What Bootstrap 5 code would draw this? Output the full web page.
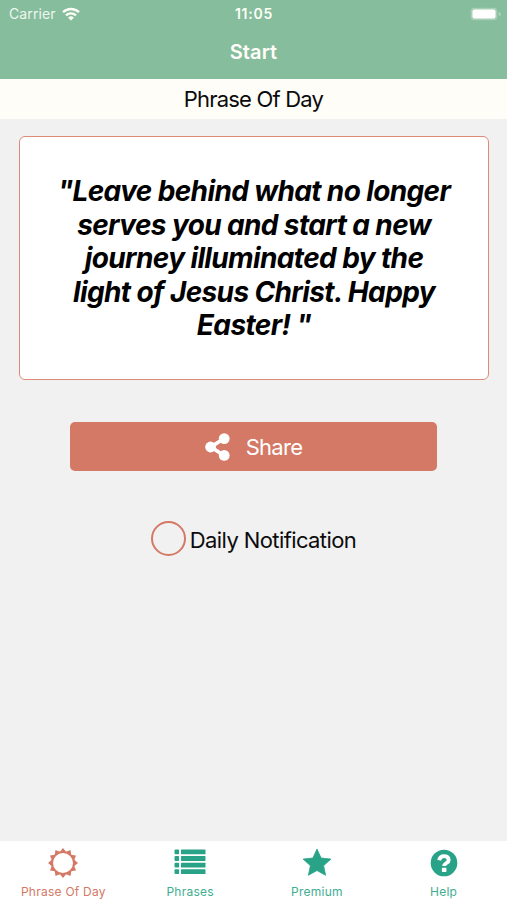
<!DOCTYPE html>
<html lang="en">
<head>
<meta charset="utf-8">
<meta name="viewport" content="width=device-width, initial-scale=1">
<title>Phrase Of Day</title>
<link href="https://cdn.jsdelivr.net/npm/bootstrap@5.3.0/dist/css/bootstrap.min.css" rel="stylesheet">
<style>
  :root { --coral: #d47965; --mint: #86bd9d; --teal: #29a387; }
  body { font-family: Inter, "Liberation Sans", sans-serif; background: #f1f1f1; color: #0b0b0b; overflow: hidden; }
  svg { display: block; flex: none; }
  .app-head { background: var(--mint); height: 79px; color: #fffef8; }
  .status { height: 27px; padding: 0 6px 0 9px; font-size: 14px; line-height: 27px; }
  .status > div { flex: 1 1 0; }
  .carrier { letter-spacing: .1px; color: #eef7ee; gap: 6px; }
  .clock { font-weight: 600; letter-spacing: .75px; margin-right: 2px; }
  .app-title { font-size: 20px; font-weight: 600; line-height: 51px; letter-spacing: .1px; }
  .subhead { background: #fffdf8; height: 40px; font-size: 22px; line-height: 40px; letter-spacing: -.8px; }
  .quote-card { margin: 17px 18px 0 19px; height: 244px; border: 1.5px solid #dd8b79; border-radius: 6px; background: #fff; }
  .quote { font-size: 28px; font-weight: 700; font-style: italic; line-height: 33.6px; letter-spacing: -.63px; color: #000; padding-top: 38px; }
  .share { width: 367px; height: 49px; margin: 42px auto 0 70px; background: var(--coral); border-radius: 5px; border: 0; font-size: 22px; letter-spacing: -.7px; color: #fff; gap: 16px; padding: 0; }
  .share:hover { background: var(--coral); color: #fff; }
  .share span { padding-top: 1px; }
  .notify { margin-top: 49px; gap: 4px; font-size: 22px; letter-spacing: -.6px; }
  .notify .caption-text { padding-top: 4px; }
  .ring { width: 35px; height: 35px; border: 2px solid var(--coral); border-radius: 50%; }
  .tabs { height: 59px; background: #fff; color: var(--teal); }
  .tabs a { flex: 1 1 0; color: inherit; font-size: 12px; line-height: 14px; letter-spacing: .25px; padding-top: 6px; }
  .tabs a span { margin-top: 6px; color: #3eae90; }
  .tabs a.active, .tabs a.active span { color: var(--coral); }
</style>
</head>
<body class="vh-100 d-flex flex-column">
<header class="app-head text-center">
  <div class="status d-flex align-items-center">
    <div class="d-flex align-items-center carrier"><span>Carrier</span>
      <svg width="18" height="14" viewBox="0 0 18 14" fill="none" stroke="#fffef8" stroke-width="2.4"><path d="M1 5.200a11.500 11.500 0 0 1 16 0M4 8.400a7.200 7.200 0 0 1 10 0"/><path d="M9 13.600 6.100 10.700a4.200 4.200 0 0 1 5.800 0z" fill="#fffef8" stroke="none"/></svg>
    </div>
    <span class="clock">11:05</span>
    <div class="d-flex justify-content-end">
      <svg width="31" height="14" viewBox="0 0 31 14"><rect x=".7" y=".7" width="26.6" height="12.6" rx="3.6" fill="#a6d0b5"/><rect x="2.5" y="2.5" width="23" height="9" rx="2" fill="#fff"/><path d="M28.800 5v4q2-.7 2-2t-2-2" fill="#b3d8c0"/></svg>
    </div>
  </div>
  <div class="app-title">Start</div>
</header>
<div class="subhead text-center">Phrase Of Day</div>
<main class="flex-grow-1">
  <section class="quote-card text-center">
    <p class="quote mb-0">"Leave behind what no longer<br>serves you and start a new<br>journey illuminated by the<br>light of Jesus Christ. Happy<br>Easter! "</p>
  </section>
  <button type="button" class="btn share d-flex align-items-center justify-content-center">
    <svg width="25" height="28" viewBox="0 0 25 28" fill="#fff"><path d="M19 5.500 6 14l13 8.500" fill="none" stroke="#fff" stroke-width="3.800"/><circle cx="19.200" cy="5.600" r="5.400"/><circle cx="5.600" cy="14" r="5.400"/><circle cx="19.200" cy="22.400" r="5.400"/></svg>
    <span>Share</span>
  </button>
  <div class="notify d-flex align-items-center justify-content-center"><span class="ring"></span><span class="caption-text">Daily Notification</span></div>
</main>
<nav class="tabs d-flex text-center">
  <a href="#" class="active d-flex flex-column align-items-center text-decoration-none">
    <svg width="30" height="32" viewBox="-15 -16 30 32" fill="currentColor"><defs><path id="ray" d="M0-15 3.400-10.800h-6.800z"/></defs><g id="half"><use href="#ray"/><use href="#ray" transform="rotate(30)"/><use href="#ray" transform="rotate(60)"/><use href="#ray" transform="rotate(90)"/><use href="#ray" transform="rotate(120)"/><use href="#ray" transform="rotate(150)"/></g><use href="#half" transform="rotate(180)"/><circle r="10.900" fill="none" stroke="currentColor" stroke-width="1.800"/></svg>
    <span>Phrase Of Day</span></a>
  <a href="#" class="d-flex flex-column align-items-center text-decoration-none">
    <svg width="32" height="32" viewBox="0 0 32 32" fill="currentColor"><g id="row"><rect x=".5" y="2.500" width="4.600" height="4.800" rx="1"/><rect x="7" y="2.500" width="24.500" height="4.800" rx=".6"/></g><use href="#row" y="6.600"/><use href="#row" y="13.200"/><use href="#row" y="19.800"/></svg>
    <span>Phrases</span></a>
  <a href="#" class="d-flex flex-column align-items-center text-decoration-none">
    <svg width="30" height="32" viewBox="0 0 30 32" fill="currentColor" stroke="currentColor" stroke-width=".8" stroke-linejoin="round"><path d="m15 2 4.100 9 9.800 1.100-7.300 6.600 2 9.600L15 23.500l-8.600 4.800 2-9.600L1.100 12.100 10.900 11z"/></svg>
    <span>Premium</span></a>
  <a href="#" class="d-flex flex-column align-items-center text-decoration-none">
    <svg width="28" height="32" viewBox="0 0 28 32"><circle cx="14" cy="16" r="13.300" fill="currentColor"/><path d="M9.100 13.200c.7-3 2.500-4.100 4.900-4.100 2.800 0 4.700 1.500 4.700 3.800 0 3.200-4.500 3-4.500 6.200" fill="none" stroke="#fff" stroke-width="3.900"/><rect x="11.900" y="20.800" width="4.500" height="4.300" rx=".7" fill="#fff"/></svg>
    <span>Help</span></a>
</nav>
<script src="https://cdn.jsdelivr.net/npm/bootstrap@5.3.0/dist/js/bootstrap.bundle.min.js"></script>
</body>
</html>
